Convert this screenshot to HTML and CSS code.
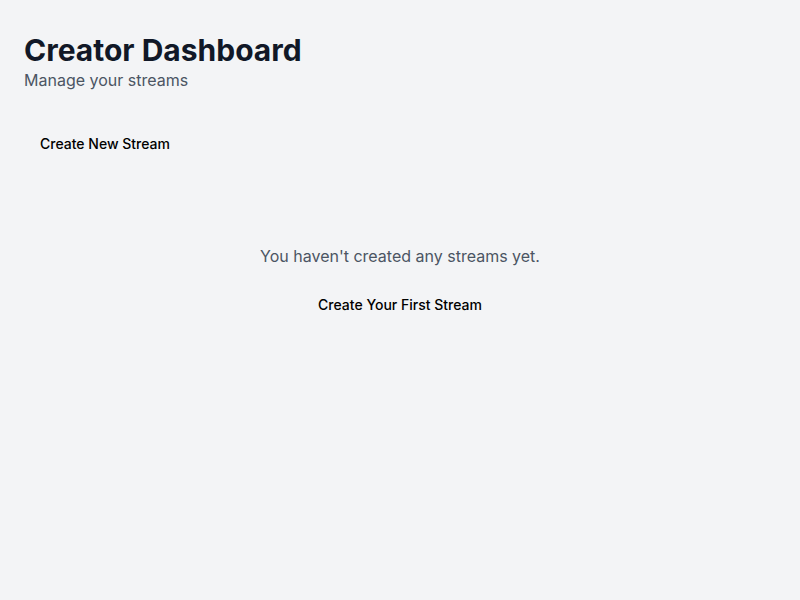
FILE: index.html
```html
<!DOCTYPE html>
<html lang="en">
<head>
<meta charset="utf-8">
<title>Creator Dashboard</title>
<link rel="stylesheet" href="styles.css">
</head>
<body>
<main class="page">
  <header class="header">
    <h1 class="title">Creator Dashboard</h1>
    <p class="subtitle">Manage your streams</p>
  </header>
  <div class="actions">
    <button class="btn" type="button">Create New Stream</button>
  </div>
  <section class="empty">
    <p class="empty-text">You haven't created any streams yet.</p>
    <button class="btn" type="button">Create Your First Stream</button>
  </section>
</main>
</body>
</html>
```

FILE: styles.css
```css
* { box-sizing: border-box; }
html, body {
  margin: 0;
  padding: 0;
  height: 100%;
  background: #f3f4f6;
  font-family: Inter, "Liberation Sans", sans-serif;
}
.page {
  padding: 32px 24px;
}
.header {
  margin-bottom: 31px;
}
.title {
  margin: 0;
  font-size: 30px;
  line-height: 36px;
  font-weight: 700;
  color: #111827;
}
.subtitle {
  margin: 0;
  font-size: 16px;
  line-height: 24px;
  color: #4b5563;
}
.btn {
  height: 40px;
  padding: 0 16px;
  border: 0;
  background: transparent;
  font-family: inherit;
  font-size: 14px;
  font-weight: 500;
  color: #000;
  display: inline-flex;
  align-items: center;
  justify-content: center;
}
.empty {
  margin-top: 33px;
  padding: 48px 0;
  display: flex;
  flex-direction: column;
  align-items: center;
}
.empty-text {
  margin: 0 0 16px;
  font-size: 16px;
  line-height: 24px;
  color: #4b5563;
}
```
